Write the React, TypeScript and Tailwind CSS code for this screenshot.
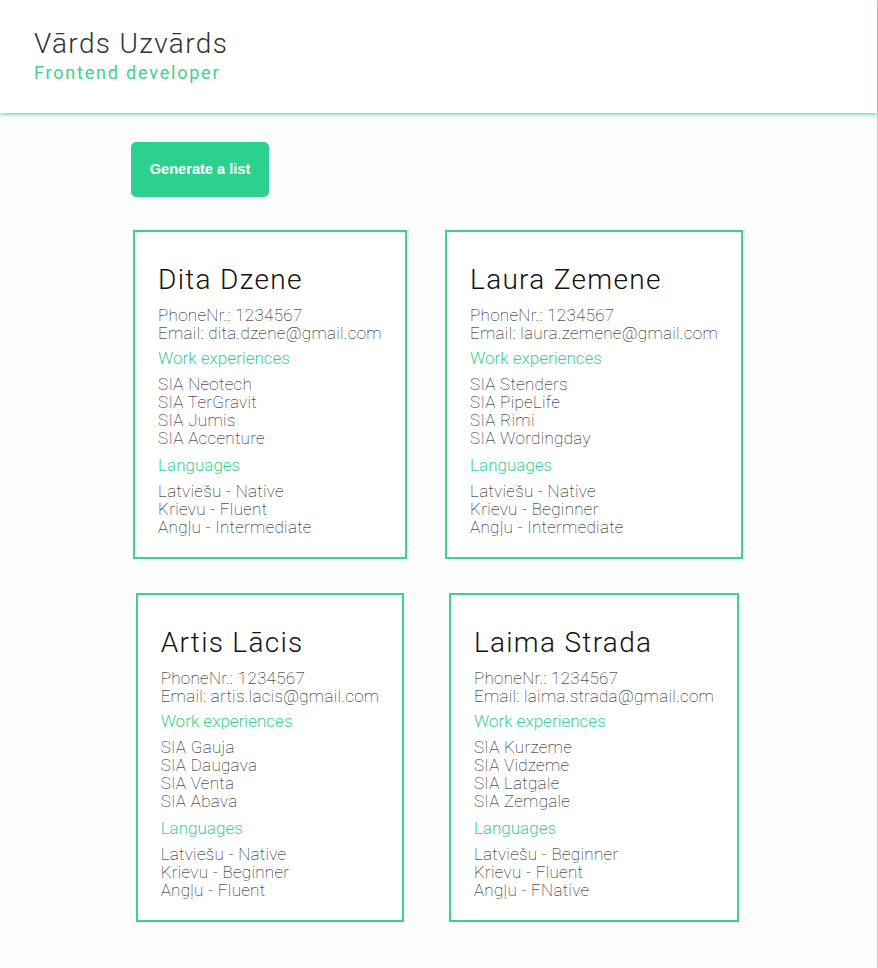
const PEOPLE = [
  {
    name: "Dita Dzene",
    email: "dita.dzene@gmail.com",
    work: ["SIA Neotech", "SIA TerGravit", "SIA Jumis", "SIA Accenture"],
    langs: ["Latviešu - Native", "Krievu - Fluent", "Angļu - Intermediate"],
  },
  {
    name: "Laura Zemene",
    email: "laura.zemene@gmail.com",
    work: ["SIA Stenders", "SIA PipeLife", "SIA Rimi", "SIA Wordingday"],
    langs: ["Latviešu - Native", "Krievu - Beginner", "Angļu - Intermediate"],
  },
  {
    name: "Artis Lācis",
    email: "artis.lacis@gmail.com",
    work: ["SIA Gauja", "SIA Daugava", "SIA Venta", "SIA Abava"],
    langs: ["Latviešu - Native", "Krievu - Beginner", "Angļu - Fluent"],
  },
  {
    name: "Laima Strada",
    email: "laima.strada@gmail.com",
    work: ["SIA Kurzeme", "SIA Vidzeme", "SIA Latgale", "SIA Zemgale"],
    langs: ["Latviešu - Beginner", "Krievu - Fluent", "Angļu - FNative"],
  },
];

function Card({ p }: { p: (typeof PEOPLE)[number] }) {
  return (
    <div className="border-2 border-[#3ecf95] bg-white px-[23px] pt-[31px] pb-[21px] text-black">
      <h2 className="text-[28px] leading-[33px] font-light tracking-[1.3px] text-[#111]">{p.name}</h2>
      <div className="mt-[10px] text-[17px] leading-[18px] font-thin tracking-[0.3px]">
        <div>PhoneNr.: 1234567</div>
        <div>Email: {p.email}</div>
      </div>
      <h3 className="mt-[6px] text-[17px] leading-[20px] font-light text-[#3ecf95]">Work experiences</h3>
      <div className="mt-[7px] text-[17px] leading-[18px] font-thin tracking-[0.3px]">
        {p.work.map((w) => (
          <div key={w}>{w}</div>
        ))}
      </div>
      <h3 className="mt-[8px] text-[17px] leading-[20px] font-light text-[#3ecf95]">Languages</h3>
      <div className="mt-[7px] text-[17px] leading-[18px] font-thin tracking-[0.3px]">
        {p.langs.map((l) => (
          <div key={l}>{l}</div>
        ))}
      </div>
    </div>
  );
}

export default function App() {
  return (
    <div className="min-h-[968px] bg-[#fdfdfd] border-r border-[#c8c8c8] font-['Roboto',sans-serif]">
      <header className="h-[113px] bg-white pl-[34px] pt-[27px] shadow-[0_2px_3px_rgba(46,204,143,0.6)]">
        <h1 className="text-[28px] leading-[33px] font-light tracking-[1.35px] text-[#333]">Vārds Uzvārds</h1>
        <p className="mt-[2px] text-[18px] leading-[21px] tracking-[1.8px] text-[#3ecf95]">Frontend developer</p>
      </header>
      <main className="pl-[114px] pt-[29px]">
        <button className="ml-[17px] h-[55px] w-[138px] rounded-[5px] bg-[#2dd18f] font-['Liberation_Sans',sans-serif] text-[14.6px] font-bold text-white">
          Generate a list
        </button>
        <div className="mt-[33px] grid grid-cols-[312px_312px] gap-x-[12px] gap-y-[34px] justify-items-center">
          {PEOPLE.map((p) => (
            <Card key={p.name} p={p} />
          ))}
        </div>
      </main>
    </div>
  );
}
